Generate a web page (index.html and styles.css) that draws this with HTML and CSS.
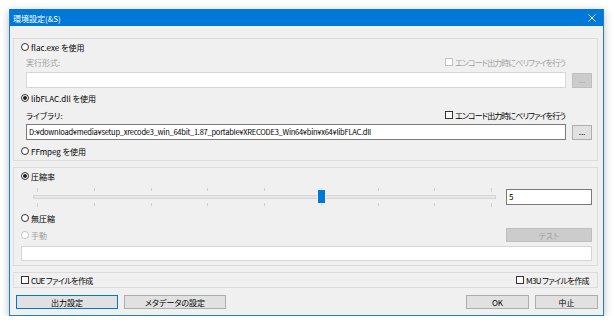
FILE: index.html
```html
<!DOCTYPE html>
<html lang="ja">
<head>
  <meta charset="UTF-8">
  <title>環境設定</title>
  <link rel="stylesheet" href="styles.css">
</head>
<body>

  <div class="window">
    <div class="titlebar">
      <span class="title">環境設定(&amp;S)</span>
      <svg class="close" width="8" height="8" viewBox="0 0 8 8">
        <path d="M0.5 0.5 L7.5 7.5 M7.5 0.5 L0.5 7.5" stroke="#fff" stroke-width="0.9" fill="none"/>
      </svg>
    </div>

    <div class="content">
      <!-- エンコーダの選択 -->
      <div class="group g-encoder">
        <div class="row r-a"><span class="radio"></span>flac.exe を使用</div>
        <div class="row sub r-b disabled">
          <span>実行形式:</span>
          <span class="check-label verify"><span class="check"></span>エンコード出力時にベリファイを行う</span>
        </div>
        <div class="row sub field r-c">
          <div class="input off"></div>
          <button class="dots" disabled>...</button>
        </div>
        <div class="row r-d"><span class="radio on"></span>libFLAC.dll を使用</div>
        <div class="row sub r-d">
          <span>ライブラリ:</span>
          <span class="check-label verify"><span class="check"></span>エンコード出力時にベリファイを行う</span>
        </div>
        <div class="row sub field r-f">
          <div class="input path">D:¥download¥media¥setup_xrecode3_win_64bit_1.87_portable¥XRECODE3_Win64¥bin¥x64¥libFLAC.dll</div>
          <button class="dots">...</button>
        </div>
        <div class="row r-g"><span class="radio"></span>FFmpeg を使用</div>
      </div>

      <!-- 圧縮の設定 -->
      <div class="group g-level">
        <div class="row r-a"><span class="radio on"></span>圧縮率</div>
        <div class="slider-row">
          <div class="slider">
            <div class="ticks"><i class="long"></i><i></i><i></i><i></i><i></i><i></i><i></i><i></i><i class="long"></i></div>
            <div class="track"></div>
            <div class="ticks"><i class="long"></i><i></i><i></i><i></i><i></i><i></i><i></i><i></i><i class="long"></i></div>
            <span class="thumb"></span>
          </div>
          <div class="input num">5</div>
        </div>
        <div class="row r-none"><span class="radio"></span>無圧縮</div>
        <div class="row r-manual disabled">
          <span class="radio"></span>手動
          <button class="test" disabled>テスト</button>
        </div>
        <div class="input off cmd"></div>
      </div>

      <div class="group g-files">
        <span class="check-label playlist"><span class="check"></span>CUE ファイルを作成</span>
        <span class="check-label playlist"><span class="check"></span>M3U ファイルを作成</span>
      </div>

      <div class="actions">
        <button class="wide focus">出力設定</button>
        <button class="wide">メタデータの設定</button>
        <button class="short push">OK</button>
        <button class="short">中止</button>
      </div>
    </div>
  </div>

</body>
</html>
```

FILE: styles.css
```css
body {
  margin: 0;
  background: #ffffff;
  font-family: "Noto Sans CJK JP", "Noto Sans", sans-serif;
  font-size: 8px;
  font-feature-settings: "palt";
  color: #000;
}

.window {
  margin: 9px 0 0 9px;
  width: 593px;
  border: 1px solid #1a80d6;
  background: #f0f0f0;
  box-shadow: 0 2px 8px rgba(0, 0, 0, 0.28);
}

.titlebar {
  height: 16px;
  margin-top: -1px;
  padding-top: 1px;
  background: #0078d7;
  color: #fff;
  display: flex;
  align-items: center;
  padding-left: 3px;
}

.close {
  margin-left: auto;
  margin-right: 7px;
}

.content {
  padding: 12px 5px 6px 3px;
}

.group {
  border: 1px solid #dcdcdc;
  padding: 1px 5px 2px 7px;
}

.g-level {
  margin-top: 6px;
  padding-bottom: 4px;
}

.g-files {
  margin-top: 6px;
  padding: 0 8px 0 7px;
  height: 14px;
  display: flex;
  align-items: center;
  justify-content: space-between;
}

.row {
  height: 14px;
  display: flex;
  align-items: center;
  white-space: nowrap;
}

.row.sub {
  padding-left: 5px;
}

.r-b { margin-top: 1px; }
.r-c { margin-top: 3px; }
.r-d { margin-top: 3px; }
.r-f { margin-top: 2px; }
.r-g { margin-top: 4px; }
.r-none { margin-top: 5px; }
.r-manual { margin-top: 3px; }

.field {
  height: 16px;
}

.disabled {
  color: #a0a0a0;
}

.radio {
  width: 8px;
  height: 8px;
  border: 1px solid #333;
  border-radius: 50%;
  background: #fff;
  box-sizing: border-box;
  margin-right: 2px;
  display: inline-flex;
  align-items: center;
  justify-content: center;
}

.radio.on::after {
  content: "";
  width: 4px;
  height: 4px;
  border-radius: 50%;
  background: #222;
}

.disabled .radio {
  border-color: #c4c4c4;
}

.check-label {
  display: inline-flex;
  align-items: center;
  white-space: nowrap;
}

.verify {
  letter-spacing: -0.9px;
}

.playlist {
  letter-spacing: -0.6px;
}

.row .check-label {
  margin-left: auto;
  margin-right: 27px;
}

.check {
  width: 8px;
  height: 8px;
  border: 1px solid #333;
  background: #fff;
  box-sizing: border-box;
  margin-right: 2px;
}

.disabled .check {
  border-color: #c4c4c4;
}

.input {
  box-sizing: border-box;
  height: 16px;
  flex: 1;
  background: #fff;
  border: 1px solid #7a7a7a;
  padding-left: 2px;
  line-height: 14px;
  white-space: nowrap;
  overflow: hidden;
}

.input.path {
  font-size: 7.5px;
  letter-spacing: -0.25px;
}

.input.off {
  border-color: #d6d6d6;
}

button {
  font-family: inherit;
  font-size: 8px;
  font-feature-settings: "palt";
  box-sizing: border-box;
  height: 14px;
  padding: 0;
  border: 1px solid #adadad;
  background: #e1e1e1;
  color: #000;
}

button:disabled {
  background: #cccccc;
  border-color: #bfbfbf;
  color: #a0a0a0;
}

.dots {
  width: 20px;
  height: 15px;
  margin-left: 6px;
  line-height: 8px;
}

.slider-row {
  margin-top: 4px;
  height: 19px;
  display: flex;
  align-items: flex-start;
}

.slider {
  position: relative;
  width: 463px;
  margin-left: 12px;
}

.ticks {
  height: 3px;
  margin-top: 1px;
  padding: 0 4px;
  display: flex;
  justify-content: space-between;
}

.ticks + .track + .ticks {
  margin-top: 4px;
}

.ticks i {
  width: 1px;
  height: 3px;
  background: #cfcfcf;
}

.ticks i.long {
  height: 4px;
}

.track {
  margin-top: 4px;
  height: 4px;
  box-sizing: border-box;
  background: #e7e7e7;
  border: 1px solid #d6d6d6;
}

.thumb {
  position: absolute;
  left: 285px;
  top: 3px;
  width: 7px;
  height: 13px;
  background: #0078d7;
  border: 1px solid #f0f0f0;
  box-sizing: content-box;
  margin: -1px 0 0 -1px;
}

.num {
  flex: none;
  width: 86px;
  margin-left: 10px;
  margin-top: 2px;
}

.test {
  margin-left: auto;
  width: 86px;
  height: 14px;
}

.cmd {
  flex: none;
  margin-top: 4px;
  height: 15px;
}

.actions {
  margin-top: 7px;
  padding-left: 3px;
  display: flex;
  gap: 6px;
}

.wide {
  width: 102px;
}

.short {
  width: 63px;
}

.push {
  margin-left: auto;
}

.focus {
  border-color: #0078d7;
}
```
